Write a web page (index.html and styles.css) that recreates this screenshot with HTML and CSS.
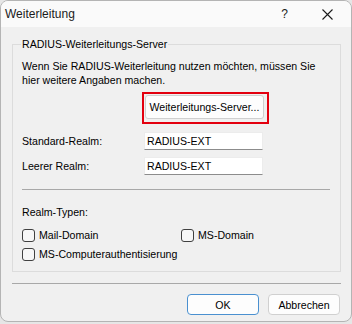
FILE: index.html
```html
<!DOCTYPE html>
<html lang="de">
<head>
    <meta charset="UTF-8">
    <meta name="viewport" content="width=device-width, initial-scale=1.0">
    <title>Weiterleitung</title>
    <link rel="stylesheet" href="styles.css">
</head>
<body>
    <div class="window">
        <div class="titlebar">
            <span class="title">Weiterleitung</span>
            <span class="help">?</span>
            <span class="close">
                <svg width="11" height="11" viewBox="0 0 11 11">
                    <path d="M0.5 0.5 L10.5 10.5 M10.5 0.5 L0.5 10.5" stroke="#1b1b1b" stroke-width="1.1" fill="none"/>
                </svg>
            </span>
        </div>
        <div class="dialog-body">
            <fieldset class="group">
                <legend>RADIUS-Weiterleitungs-Server</legend>
                <p class="desc">Wenn Sie RADIUS-Weiterleitung nutzen möchten, müssen Sie<br>hier weitere Angaben machen.</p>
                <div class="highlight">
                    <button class="btn server-button">Weiterleitungs-Server...</button>
                </div>
                <div class="field">
                    <label class="field-label">Standard-Realm:</label>
                    <input class="field-input" type="text" value="RADIUS-EXT">
                </div>
                <div class="field second">
                    <label class="field-label">Leerer Realm:</label>
                    <input class="field-input" type="text" value="RADIUS-EXT">
                </div>
                <div class="separator"></div>
                <div class="types-label">Realm-Typen:</div>
                <div class="checks">
                    <label class="check"><span class="box"></span>Mail-Domain</label>
                    <label class="check"><span class="box"></span>MS-Domain</label>
                    <label class="check"><span class="box"></span>MS-Computerauthentisierung</label>
                </div>
            </fieldset>
            <div class="bottom-separator"></div>
            <div class="actions">
                <button class="btn action ok">OK</button>
                <button class="btn action">Abbrechen</button>
            </div>
        </div>
    </div>
</body>
</html>
```

FILE: styles.css
```css
body {
    margin: 0;
    background: #e6e6e6;
    font-family: 'Liberation Sans', Arial, sans-serif;
    font-size: 10.6px;
    color: #000;
}
.window {
    width: 352px;
    height: 322px;
    box-sizing: border-box;
    background-color: #f0f0f0;
    border: 1px solid #b4b4b4;
    border-radius: 8px;
    overflow: hidden;
}
.titlebar {
    height: 26px;
    background-color: #fafafa;
    display: flex;
    align-items: center;
}
.title {
    flex: 1;
    margin-left: 4px;
    font-size: 12px;
    color: #1b1b1b;
}
.help {
    font-size: 12px;
    color: #1b1b1b;
    margin-right: 34px;
}
.close {
    display: flex;
    margin-right: 18px;
}
.dialog-body {
    padding: 11px 10px 0 11px;
}
.group {
    margin: 0;
    padding: 8px 10px 9px 9px;
    border: 1px solid #dcdcdc;
}
.group legend {
    padding: 0 1px;
    margin-left: -1px;
    line-height: 13px;
}
.desc {
    margin: 0;
    line-height: 14px;
}
.highlight {
    margin: 5px 0 0 120px;
    width: 121px;
    height: 26px;
    padding: 1px;
    border: 2px solid #e3000f;
}
.btn {
    font-family: 'Liberation Sans', Arial, sans-serif;
    font-size: 10.6px;
    color: #000;
    background-color: #fdfdfd;
    border: 1px solid #d0d0d0;
    border-radius: 3px;
    padding: 0;
}
.server-button {
    width: 119px;
    height: 24px;
}
.field {
    display: flex;
    align-items: center;
    margin-top: 8px;
}
.field.second {
    margin-top: 7px;
}
.field-label {
    width: 122px;
}
.field-input {
    width: 119px;
    height: 18px;
    box-sizing: border-box;
    padding: 0 0 0 2px;
    font-family: 'Liberation Sans', Arial, sans-serif;
    font-size: 10.6px;
    color: #000;
    background-color: #fff;
    border: 1px solid #ececec;
    border-bottom-color: #8c8c8c;
    outline: none;
}
.separator {
    margin: 14px 0 0 0;
    border-top: 1px solid #a8a8a8;
}
.types-label {
    margin-top: 16px;
    line-height: 13px;
}
.checks {
    display: grid;
    grid-template-columns: 159px auto;
    row-gap: 3px;
    margin-top: 8px;
}
.check {
    display: flex;
    align-items: center;
    height: 16px;
    white-space: nowrap;
}
.box {
    width: 11px;
    height: 11px;
    border: 1px solid #404040;
    border-radius: 3px;
    background-color: #f7f7f7;
    margin-right: 4px;
}
.bottom-separator {
    margin-top: 11px;
    border-top: 1px solid #a8a8a8;
}
.actions {
    display: flex;
    justify-content: flex-end;
    gap: 9px;
    margin-top: 10px;
    padding-right: 1px;
}
.action {
    width: 72px;
    height: 21px;
    border-radius: 4px;
}
.action.ok {
    border-color: #4a90d0;
}
```
